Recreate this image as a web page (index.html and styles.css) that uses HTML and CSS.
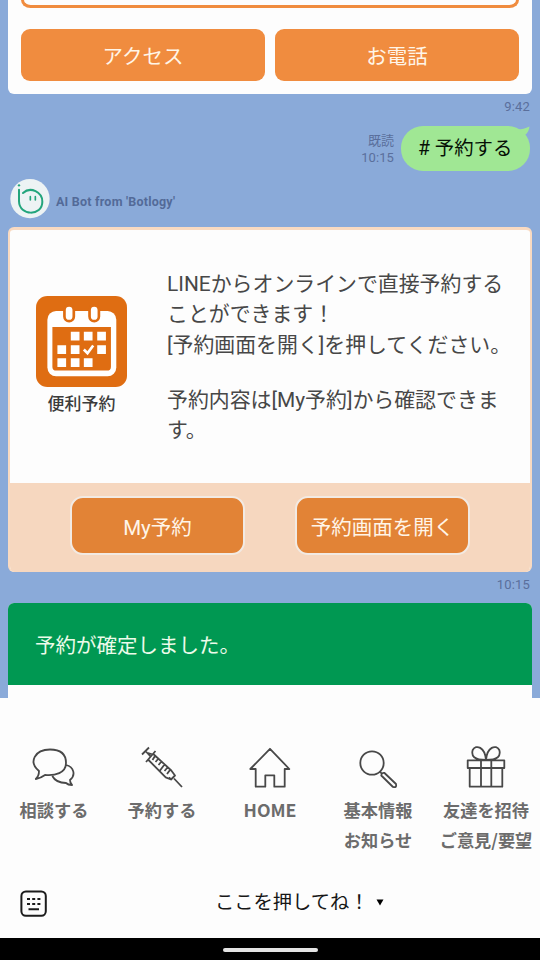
FILE: index.html
```html
<!DOCTYPE html>
<html lang="ja">
<head>
<meta charset="utf-8">
<title>AI Bot</title>
<link rel="stylesheet" href="styles.css">
</head>
<body>
<main class="chat">
  <section class="card contact">
    <div class="outline"></div>
    <div class="contact-actions"><div class="btn">アクセス</div><div class="btn">お電話</div></div>
  </section>
  <div class="time">9:42</div>
  <div class="sent">
    <div class="read"><span>既読</span><span class="clock">10:15</span></div>
    <div class="bubble"># 予約する
      <svg class="tail" viewBox="0 0 16 14"><path d="M0 3C5 4 10 3 15.5 .5C15 4 14 7 11 9L11 14Z"/></svg>
    </div>
  </div>
  <div class="sender">
    <svg class="avatar" viewBox="30 35 120 120">
      <circle cx="90" cy="94" r="59" fill="#edf3f4"/>
      <g fill="none" stroke="#23a57c" stroke-width="6" stroke-linecap="round"><path d="M57 67V102C58 147 127 147 127 103C127 75 92 56 69 77"/><path d="M91 88V98M106 88V98" stroke-width="5"/></g>
      <circle cx="57" cy="54" r="3.5" fill="#23a57c"/>
    </svg>
    <span>AI Bot from 'Botlogy'</span>
  </div>
  <section class="booking">
    <div class="booking-body">
      <div class="feature">
        <svg viewBox="48 34 272 272">
          <rect x="48" y="34" width="272" height="272" rx="34" fill="#df6d12"/>
          <rect x="82" y="79" width="206" height="195" rx="26" fill="#fff"/>
          <path d="M97 127H272V246Q272 257 260 257H109Q97 257 97 246Z" fill="#df6d12"/>
          <g fill="#fff" stroke="#df6d12" stroke-width="8"><rect x="133" y="62" width="28" height="47" rx="14"/><rect x="208" y="62" width="28" height="47" rx="14"/></g>
          <path fill="#fff" d="M152 141h26v26h-26zM191 141h26v26h-26zM231 141h26v26h-26zM112 181h26v26h-26zM152 181h26v26h-26zM231 181h26v26h-26zM112 220h26v26h-26zM152 220h26v26h-26zM191 220h26v26h-26z"/>
          <path d="M191 194L202 205L219 182" fill="none" stroke="#fff" stroke-width="8"/>
        </svg>
        <span>便利予約</span>
      </div>
      <div class="copy">
        <p>LINEからオンラインで直接予約する<br>ことができます！<br>[予約画面を開く]を押してください。</p>
        <p>予約内容は[My予約]から確認できま<br>す。</p>
      </div>
    </div>
    <div class="booking-actions"><div class="btn">My予約</div><div class="btn">予約画面を開く</div></div>
  </section>
  <div class="time">10:15</div>
  <section class="confirmed"><h2>予約が確定しました。</h2></section>
</main>
<nav class="menu">
  <div class="item"><svg viewBox="24 740 60 50"><path d="M39 771C28 762 35 749.5 50 749.5S66 758 66 763C66 773 55 776 45 775Q41 778 35.8 779Q39 776 39 771ZM66 765C74 767 76 775 70 780Q70 783 72 785Q68 785 66 783C60 783 55 781 52.3 776"/></svg><span>相談する</span></div>
  <div class="item"><svg viewBox="132 740 60 50"><path d="M142 754.5L149 747.5M146 762L155.5 751M145 750.5L151 757M148 753L153 754.5M148.5 760L165.7 777.3L171 779.5L175 775.5L171.3 770.5L153.3 754M171 779.5L169 777.5M174 778.5L182 787M155 756L152.5 760M158.5 758.5L155.5 762M161.5 761.5L158.5 765M164.5 764.5L160 770.5M167.5 767.5L164.5 771M170 770L167 774"/></svg><span>予約する</span></div>
  <div class="item"><svg viewBox="240 740 60 50"><path d="M270 748.8L289.3 769H284.7V786.7H274.3V775.3H265.3V786.7H255.7V769H250.3Z"/></svg><span class="home">HOME</span></div>
  <div class="item"><svg viewBox="348 740 60 50"><circle cx="372" cy="763" r="11.7"/><path d="M380 771.7L382 774M381.3 775.5Q381.5 772.5 384.5 773L396 784Q397 788 393 787Z"/></svg><span>基本情報<br>お知らせ</span></div>
  <div class="item"><svg viewBox="456 740 60 50"><path d="M467.7 760.3H504.3V768H467.7ZM469.7 768V786.7H502.3V768M481 760.3V786.7M491.3 760.3V786.7M486 760C474 760 471 756 472.7 750C476 744 485 747 486 760C487 747 496 744 499.3 750C501 756 498 760 486 760"/></svg><span>友達を招待<br>ご意見/要望</span></div>
</nav>
<div class="bar">
  <svg class="keys" viewBox="0 0 28 28"><rect x="1.4" y="1.4" width="24.4" height="24.4" rx="4.5"/><path d="M7 9h3M12.2 9h3M17.4 9h3M7 14h3M12.2 14h3M17.4 14h3M8.5 19.2h10.5"/></svg>
  <div class="hint">ここを押してね！<svg viewBox="0 0 8 7"><path d="M.5.5h7L4 6.5Z"/></svg></div>
</div>
<footer class="system"><div class="handle"></div></footer>
</body>
</html>
```
FILE: styles.css
```css
* { box-sizing: border-box; }
body {
  margin: 0;
  width: 540px;
  height: 960px;
  overflow: hidden;
  font-family: Roboto, "Noto Sans CJK JP", sans-serif;
  background: #fdfdfd;
}
svg { display: block; }
.chat {
  height: 698px;
  overflow: hidden;
  padding: 0 8px;
  background: #8aaad9;
}
.card { background: #fdfdfd; }
.contact {
  height: 94px;
  padding: 0 13px;
  border-radius: 0 0 6px 6px;
}
.outline {
  height: 7.5px;
  border: 3px solid #f08c3f;
  border-top: 0;
  border-radius: 0 0 12px 12px / 0 0 10px 10px;
}
.contact-actions {
  display: grid;
  grid-template-columns: 1fr 1fr;
  gap: 10px;
  padding-top: 21.5px;
}
.btn {
  display: flex;
  align-items: center;
  justify-content: center;
  height: 52px;
  border-radius: 9px;
  background: #f08c3f;
  color: #fff5e8;
  font-size: 20.5px;
}
.time {
  height: 32px;
  padding-right: 2px;
  font-size: 13px;
  letter-spacing: .2px;
  line-height: 26px;
  text-align: right;
  color: #5a6f9c;
}
.sent {
  display: flex;
  justify-content: flex-end;
  height: 45px;
  padding-right: 2px;
}
.read {
  display: flex;
  flex-direction: column;
  align-items: flex-end;
  margin: 6px 7px 0 0;
  font-size: 13px;
  line-height: 17px;
  color: #5a6f9c;
}
.clock { letter-spacing: .1px; }
.bubble {
  position: relative;
  width: 129px;
  height: 45px;
  padding-left: 17px;
  border-radius: 22px;
  background: #a0e794;
  font-size: 19.4px;
  line-height: 45px;
  color: #061006;
}
.tail {
  position: absolute;
  top: 0;
  right: 0;
  width: 16px;
  height: 14px;
  fill: #a0e794;
}
.sender {
  display: flex;
  align-items: center;
  gap: 6px;
  height: 56px;
  padding: 4px 0 0 2px;
  font-size: 12.5px;
  font-weight: 700;
  letter-spacing: .22px;
  color: #536a98;
}
.avatar { width: 40px; height: 40px; margin-bottom: 4px; }
.booking {
  height: 345px;
  overflow: hidden;
  border: solid #f9dac1;
  border-width: 3px 2px 0;
  border-radius: 6px;
  background: #fdfdfd;
}
.booking-body { display: flex; height: 253px; }
.feature {
  display: flex;
  flex-direction: column;
  align-items: center;
  width: 91px;
  margin: 66px 40px 0 26px;
  font-size: 17px;
  font-weight: 500;
  line-height: 26px;
  color: #3c3c3c;
}
.feature svg { width: 91px; height: 91px; margin-bottom: 4px; }
.copy {
  padding-top: 39px;
  font-size: 20.9px;
  line-height: 30.4px;
  white-space: nowrap;
  color: #474747;
}
.copy p { margin: 0 0 24.6px; }
.booking-actions {
  display: flex;
  justify-content: center;
  gap: 50px;
  height: 89px;
  padding-top: 13px;
  background: #f6d7bf;
}
.booking-actions .btn {
  width: 175px;
  height: 59px;
  border: 2.5px solid #f2eae3;
  border-radius: 13px;
  background: #e28336;
}
.booking + .time { height: 31px; }
.confirmed {
  height: 95px;
  border-radius: 6px 6px 0 0;
  overflow: hidden;
  background: #fdfdfd;
}
.confirmed h2 {
  height: 82px;
  margin: 0;
  padding-left: 27px;
  background: #009852;
  color: #edfbea;
  font-size: 20.5px;
  font-weight: 400;
  line-height: 86px;
}
.menu {
  display: grid;
  grid-template-columns: repeat(5, 108px);
  height: 170px;
  padding-top: 42px;
}
.item {
  display: flex;
  flex-direction: column;
  align-items: center;
  font-family: "Noto Sans CJK JP", sans-serif;
  font-size: 17.2px;
  font-weight: 700;
  line-height: 30px;
  text-align: center;
  white-space: nowrap;
  color: #6c6c6c;
}
.item svg {
  width: 60px;
  height: 50px;
  margin-bottom: 5px;
  fill: none;
  stroke: #484848;
  stroke-width: 1.8;
  stroke-linejoin: round;
}
.home { margin-top: -1px; font-size: 17.7px; }
.bar {
  display: flex;
  align-items: center;
  height: 70px;
  padding: 2px 0 0 20px;
}
.keys {
  width: 28px;
  height: 28px;
  fill: none;
  stroke: #1c1c1c;
  stroke-width: 2;
}
.hint {
  display: flex;
  align-items: center;
  gap: 7px;
  margin: -7px 0 0 167px;
  font-size: 19.3px;
  color: #161616;
}
.hint svg { width: 8px; height: 7px; margin-top: 4px; }
.system {
  display: flex;
  justify-content: center;
  height: 22px;
  padding-top: 10px;
  background: #000;
}
.handle {
  width: 95px;
  height: 4px;
  border-radius: 2px;
  background: #e4e4e4;
}
```
